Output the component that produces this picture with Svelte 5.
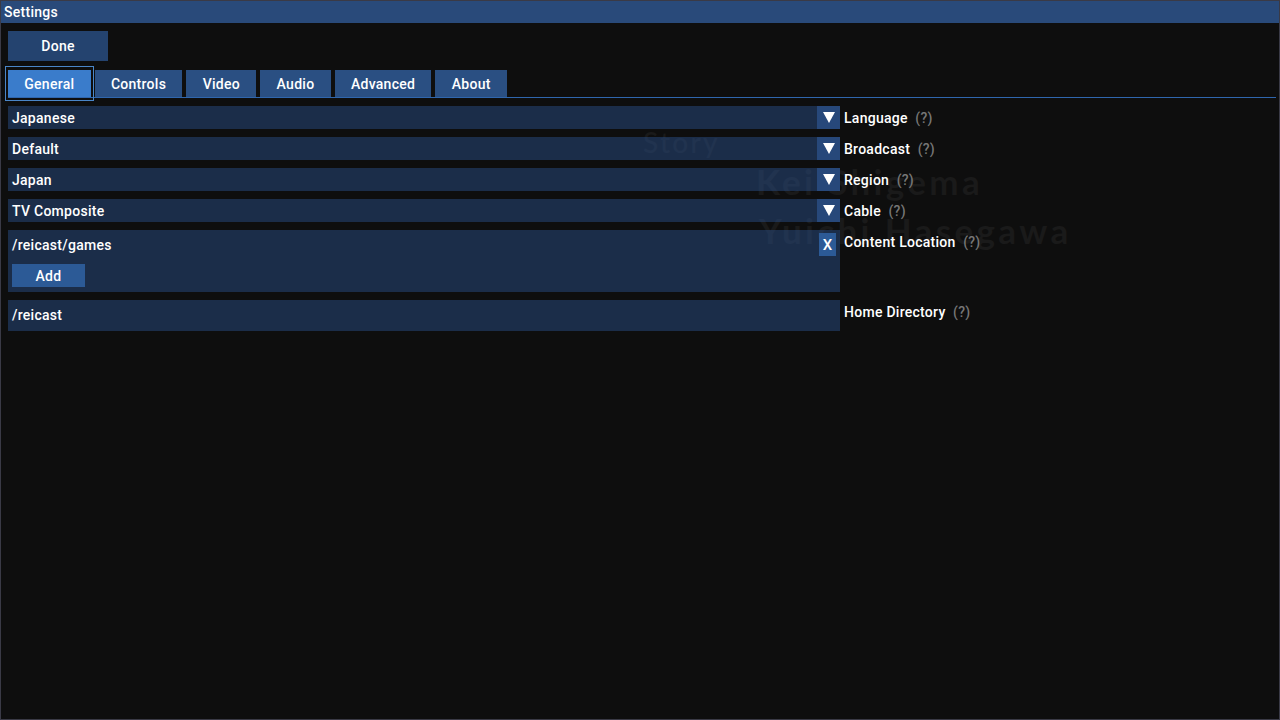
<script>
  const tabs = ['General', 'Controls', 'Video', 'Audio', 'Advanced', 'About'];
  const combos = [
    { value: 'Japanese', label: 'Language' },
    { value: 'Default', label: 'Broadcast' },
    { value: 'Japan', label: 'Region' },
    { value: 'TV Composite', label: 'Cable' },
  ];
  let active = $state('General');
</script>

<div class="window">
  <div class="credits" aria-hidden="true">
    <span class="story">Story</span>
    <span class="name first">Kei Shigema</span>
    <span class="name second">Yuichi Hasegawa</span>
  </div>

  <div class="title">Settings</div>

  <div class="body">
    <button class="done" type="button">Done</button>

    <div class="tabs">
      {#each tabs as tab}
        <button class="tab" class:active={tab === active} type="button" onclick={() => (active = tab)}>{tab}</button>
      {/each}
    </div>

    <div class="rows">
      {#each combos as combo}
        <div class="row">
          <div class="field combo">
            <span class="value">{combo.value}</span>
            <span class="arrow">
              <svg width="12" height="11" viewBox="0 0 12 11"><path d="M0 0H12L6 11Z" fill="#fff" /></svg>
            </span>
          </div>
          <span class="label">{combo.label}</span>
          <span class="help">(?)</span>
        </div>
      {/each}

      <div class="row">
        <div class="field content">
          <div class="path-line">
            <span>/reicast/games</span>
            <button class="remove" type="button">X</button>
          </div>
          <button class="add" type="button">Add</button>
        </div>
        <span class="label">Content Location</span>
        <span class="help">(?)</span>
      </div>

      <div class="row">
        <div class="field home">/reicast</div>
        <span class="label">Home Directory</span>
        <span class="help">(?)</span>
      </div>
    </div>
  </div>
</div>

<style>
  :global(body) {
    margin: 0;
    background: #0e0e0e;
  }

  .window {
    position: relative;
    box-sizing: border-box;
    width: 1280px;
    height: 720px;
    overflow: hidden;
    border: 1px solid #3a3a46;
    background: #0e0e0e;
    color: #fff;
    font-family: Roboto, "Liberation Sans", sans-serif;
    font-size: 14px;
    font-weight: 500;
    letter-spacing: 0.27px;
  }

  /* faint game credits showing through the settings window */
  .credits {
    position: absolute;
    inset: 0;
    color: #1a1a1a;
    font-family: Lato, sans-serif;
    pointer-events: none;
  }
  .credits span {
    position: absolute;
    white-space: nowrap;
  }
  .story {
    left: 642px;
    top: 124px;
    font-size: 28px;
    letter-spacing: 2.3px;
  }
  .name {
    font-size: 35px;
    font-weight: 700;
    letter-spacing: 3.35px;
  }
  .first {
    left: 755px;
    top: 159px;
  }
  .second {
    left: 758px;
    top: 208px;
  }

  .title {
    position: relative;
    height: 22px;
    padding-left: 3px;
    background: #294a7a;
    line-height: 22px;
  }

  .body {
    position: relative;
    display: flex;
    flex-direction: column;
    align-items: flex-start;
    padding: 8px 3px 0 7px;
  }

  button {
    border: 0;
    padding: 0;
    color: inherit;
    font: inherit;
    letter-spacing: inherit;
  }

  .done {
    width: 100px;
    height: 30px;
    background: #24436f;
  }

  .tabs {
    display: flex;
    align-self: stretch;
    box-sizing: border-box;
    gap: 4px;
    height: 28px;
    margin-top: 9px;
    border-bottom: 1px solid #2f66ad;
  }

  .tab {
    position: relative;
    height: 27px;
    padding: 0 16.3px;
    background: #2a4f82;
  }

  .tab.active {
    background: #3a7ccb;
  }

  .tab.active::after {
    content: "";
    position: absolute;
    inset: -4px -3px;
    border: 1px solid #4a86c8;
  }

  .rows {
    display: flex;
    flex-direction: column;
    align-self: stretch;
    gap: 8px;
    margin-top: 8px;
  }

  .row {
    display: flex;
    align-items: flex-start;
  }

  .field {
    box-sizing: border-box;
    flex: 0 0 832px;
    padding-left: 4px;
    background: rgba(41, 74, 128, 0.52);
  }

  .combo {
    display: flex;
    justify-content: space-between;
    height: 23px;
    line-height: 25px;
  }

  .arrow {
    display: flex;
    justify-content: center;
    box-sizing: border-box;
    width: 23px;
    padding-top: 6px;
    background: #27487a;
  }

  .content {
    height: 62px;
  }

  .path-line {
    display: flex;
    justify-content: space-between;
    align-items: center;
    box-sizing: border-box;
    height: 26px;
    margin-bottom: 8px;
    padding: 3px 4px 0 0;
  }

  .remove {
    width: 17px;
    height: 23px;
    background: #2c5a96;
    font-size: 15px;
  }

  .add {
    display: block;
    width: 73px;
    height: 23px;
    background: #2c5a96;
  }

  .home {
    height: 31px;
    line-height: 31px;
  }

  .label,
  .help {
    padding-top: 2px;
    line-height: 21px;
    white-space: nowrap;
  }

  .label {
    margin-left: 4px;
  }

  .help {
    margin-left: 7.5px;
    color: #777;
  }
</style>
